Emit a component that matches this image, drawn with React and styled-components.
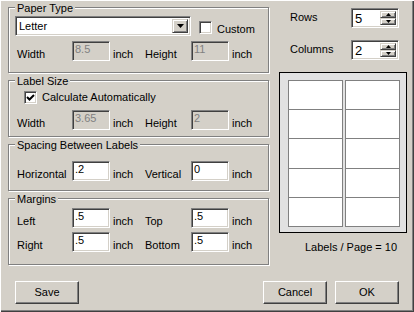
import React, { useState } from 'react';
import styled, { createGlobalStyle } from 'styled-components';

const GlobalStyle = createGlobalStyle`
  body {
    margin: 0;
    background: #d4d0c8;
  }
  * { box-sizing: border-box; }
`;

const Dialog = styled.div`
  width: 414px;
  height: 312px;
  background: #d4d0c8;
  font-family: "Liberation Sans", Arial, sans-serif;
  font-size: 11px;
  line-height: 13px;
  color: #000;
  display: flex;
  flex-direction: column;
  overflow: hidden;
  box-shadow: inset 1px 1px 0 #fff, inset -1px -1px 0 #404040, inset -2px -2px 0 #808080;
`;

const Body = styled.div`
  display: flex;
  align-items: flex-start;
`;

const LeftCol = styled.div`
  display: flex;
  flex-direction: column;
  gap: 7px;
  width: 270px;
  padding: 7px 0 0 8px;
`;

const RightCol = styled.div`
  display: flex;
  flex-direction: column;
  width: 128px;
  margin-left: 9px;
  padding-top: 8px;
`;

const Group = styled.div`
  width: 261px;
  display: flex;
  flex-direction: column;
  border: 1px solid #808080;
  box-shadow: inset 1px 1px 0 #fff, 1px 1px 0 #fff;
  padding: 0 8px ${p => p.$pb}px 8px;
`;

const Legend = styled.div`
  align-self: flex-start;
  margin: -6px 0 0 -2px;
  padding: 0 2px;
  background: #d4d0c8;
  white-space: nowrap;
`;

const FieldRow = styled.div`
  display: grid;
  grid-template-columns: 55px 38px 35px 46px 38px auto;
  align-items: end;
  margin-top: ${p => p.$mt}px;
`;

const Label = styled.span`
  white-space: nowrap;
`;

const Unit = styled.span`
  padding-left: 3px;
`;

const TextBox = styled.input`
  width: 38px;
  height: 20px;
  margin: 0;
  padding: 1px 2px 5px;
  font: inherit;
  color: #000;
  background: #fff;
  border: 1px solid;
  border-color: #808080 #fff #fff #808080;
  box-shadow: inset 1px 1px 0 #404040, inset -1px -1px 0 #d4d0c8;
  outline: none;

  &:disabled {
    background: #d4d0c8;
    color: #808080;
    -webkit-text-fill-color: #808080;
    opacity: 1;
  }
`;

const ComboRow = styled.div`
  display: flex;
  align-items: flex-end;
  margin-top: 1px;
`;

const Combo = styled.div`
  width: 176px;
  height: 20px;
  margin-left: -2px;
  display: flex;
  align-items: stretch;
  padding: 2px;
  background: #fff;
  border: 1px solid;
  border-color: #808080 #fff #fff #808080;
  box-shadow: inset 1px 1px 0 #404040, inset -1px -1px 0 #d4d0c8;
`;

const ComboText = styled.span`
  flex: 1;
  padding-left: 1px;
  line-height: 14px;
`;

const RaisedButton = styled.span`
  display: flex;
  align-items: center;
  justify-content: center;
  background: #d4d0c8;
  border: 1px solid;
  border-color: #d4d0c8 #404040 #404040 #d4d0c8;
  box-shadow: inset 1px 1px 0 #fff, inset -1px -1px 0 #808080;
`;

const DropButton = styled(RaisedButton)`
  width: 16px;
`;

const CheckLabel = styled.label`
  display: flex;
  align-items: flex-end;
  gap: 5px;
  margin-left: ${p => p.$ml}px;
`;

const CheckBox = styled.span`
  width: 13px;
  height: 13px;
  margin-bottom: ${p => p.$mb}px;
  display: flex;
  align-items: center;
  justify-content: center;
  background: #fff;
  border: 1px solid;
  border-color: #808080 #fff #fff #808080;
  box-shadow: inset 1px 1px 0 #404040, inset -1px -1px 0 #d4d0c8;
`;

const CheckRow = styled.div`
  margin-top: 3px;
  display: flex;
`;

const SpinRow = styled.div`
  display: flex;
  align-items: center;
  padding-left: 11px;
  margin-top: ${p => p.$mt}px;
`;

const SpinLabel = styled.span`
  width: 61px;
  margin-top: -2px;
`;

const Spinner = styled.div`
  width: 48px;
  height: 20px;
  display: flex;
  padding: 2px;
  background: #fff;
  border: 1px solid;
  border-color: #808080 #fff #fff #808080;
  box-shadow: inset 1px 1px 0 #404040, inset -1px -1px 0 #d4d0c8;
`;

const SpinValue = styled.span`
  flex: 1;
  font-size: 13px;
  line-height: 16px;
  padding-left: 1px;
`;

const SpinButtons = styled.div`
  width: 16px;
  display: flex;
  flex-direction: column;
`;

const SpinButton = styled(RaisedButton)`
  flex: 1;
`;

const Preview = styled.div`
  margin-top: 12px;
  height: 161px;
  border: 1px solid #000;
  background: #e1e1e1;
  padding: 7px 6px 5px 8px;
  display: grid;
  grid-template-columns: repeat(${p => p.$cols}, 1fr);
  column-gap: 2px;
`;

const SheetColumn = styled.div`
  display: grid;
  grid-template-rows: repeat(${p => p.$rows}, 1fr);
  gap: 1px;
  background: #808080;
  border: 1px solid #808080;
`;

const Cell = styled.div`
  background: #fff;
`;

const Caption = styled.div`
  margin-top: 8px;
  padding-left: 26px;
  white-space: nowrap;
`;

const Footer = styled.div`
  display: flex;
  gap: 8px;
  margin-top: 16px;
  padding: 0 15px;
`;

const Button = styled.button`
  width: 64px;
  height: 23px;
  margin: 0;
  margin-left: ${p => (p.$push ? 'auto' : '0')};
  padding: 0;
  font: inherit;
  color: #000;
  background: #d4d0c8;
  border: 1px solid;
  border-color: #fff #404040 #404040 #fff;
  box-shadow: inset -1px -1px 0 #808080, inset 1px 1px 0 #d4d0c8;
`;

const Arrow = ({ w, h, up }) => (
  <svg width={w} height={h} viewBox={`0 0 ${w} ${h}`}>
    <polygon
      points={up ? `0,${h} ${w},${h} ${w / 2},0` : `0,0 ${w},0 ${w / 2},${h}`}
      fill="#000"
    />
  </svg>
);

const Check = () => (
  <svg width="9" height="9" viewBox="0 0 9 9">
    <path d="M1 4 L3.5 6.5 L8 2" fill="none" stroke="#000" strokeWidth="2" />
  </svg>
);

const SpinBox = ({ label, value, mt }) => (
  <SpinRow $mt={mt}>
    <SpinLabel>{label}</SpinLabel>
    <Spinner>
      <SpinValue>{value}</SpinValue>
      <SpinButtons>
        <SpinButton><Arrow w={5} h={3} up /></SpinButton>
        <SpinButton><Arrow w={5} h={3} /></SpinButton>
      </SpinButtons>
    </Spinner>
  </SpinRow>
);

const Fields = ({ mt, a, b, disabled }) => (
  <FieldRow $mt={mt}>
    <Label>{a.label}</Label>
    <TextBox defaultValue={a.value} disabled={disabled} />
    <Unit>inch</Unit>
    <Label>{b.label}</Label>
    <TextBox defaultValue={b.value} disabled={disabled} />
    <Unit>inch</Unit>
  </FieldRow>
);

const App = () => {
  const [rows] = useState(5);
  const [cols] = useState(2);

  return (
    <Dialog>
      <GlobalStyle />
      <Body>
        <LeftCol>
          <Group $pb={11}>
            <Legend>Paper Type</Legend>
            <ComboRow>
              <Combo>
                <ComboText>Letter</ComboText>
                <DropButton><Arrow w={7} h={4} /></DropButton>
              </Combo>
              <CheckLabel $ml={8}>
                <CheckBox $mb={2} />
                <span>Custom</span>
              </CheckLabel>
            </ComboRow>
            <Fields mt={5} disabled a={{ label: 'Width', value: '8.5' }} b={{ label: 'Height', value: '11' }} />
          </Group>

          <Group $pb={6}>
            <Legend>Label Size</Legend>
            <CheckRow>
              <CheckLabel $ml={7}>
                <CheckBox $mb={0}><Check /></CheckBox>
                <span>Calculate Automatically</span>
              </CheckLabel>
            </CheckRow>
            <Fields mt={6} disabled a={{ label: 'Width', value: '3.65' }} b={{ label: 'Height', value: '2' }} />
          </Group>

          <Group $pb={9}>
            <Legend>Spacing Between Labels</Legend>
            <Fields mt={9} a={{ label: 'Horizontal', value: '.2' }} b={{ label: 'Vertical', value: '0' }} />
          </Group>

          <Group $pb={12}>
            <Legend>Margins</Legend>
            <Fields mt={2} a={{ label: 'Left', value: '.5' }} b={{ label: 'Top', value: '.5' }} />
            <Fields mt={4} a={{ label: 'Right', value: '.5' }} b={{ label: 'Bottom', value: '.5' }} />
          </Group>
        </LeftCol>

        <RightCol>
          <SpinBox label="Rows" value={rows} mt={0} />
          <SpinBox label="Columns" value={cols} mt={12} />
          <Preview $cols={cols}>
            {Array.from({ length: cols }).map((_, c) => (
              <SheetColumn key={c} $rows={rows}>
                {Array.from({ length: rows }).map((_, r) => <Cell key={r} />)}
              </SheetColumn>
            ))}
          </Preview>
          <Caption>Labels / Page = {rows * cols}</Caption>
        </RightCol>
      </Body>

      <Footer>
        <Button>Save</Button>
        <Button $push>Cancel</Button>
        <Button>OK</Button>
      </Footer>
    </Dialog>
  );
};

export default App;
